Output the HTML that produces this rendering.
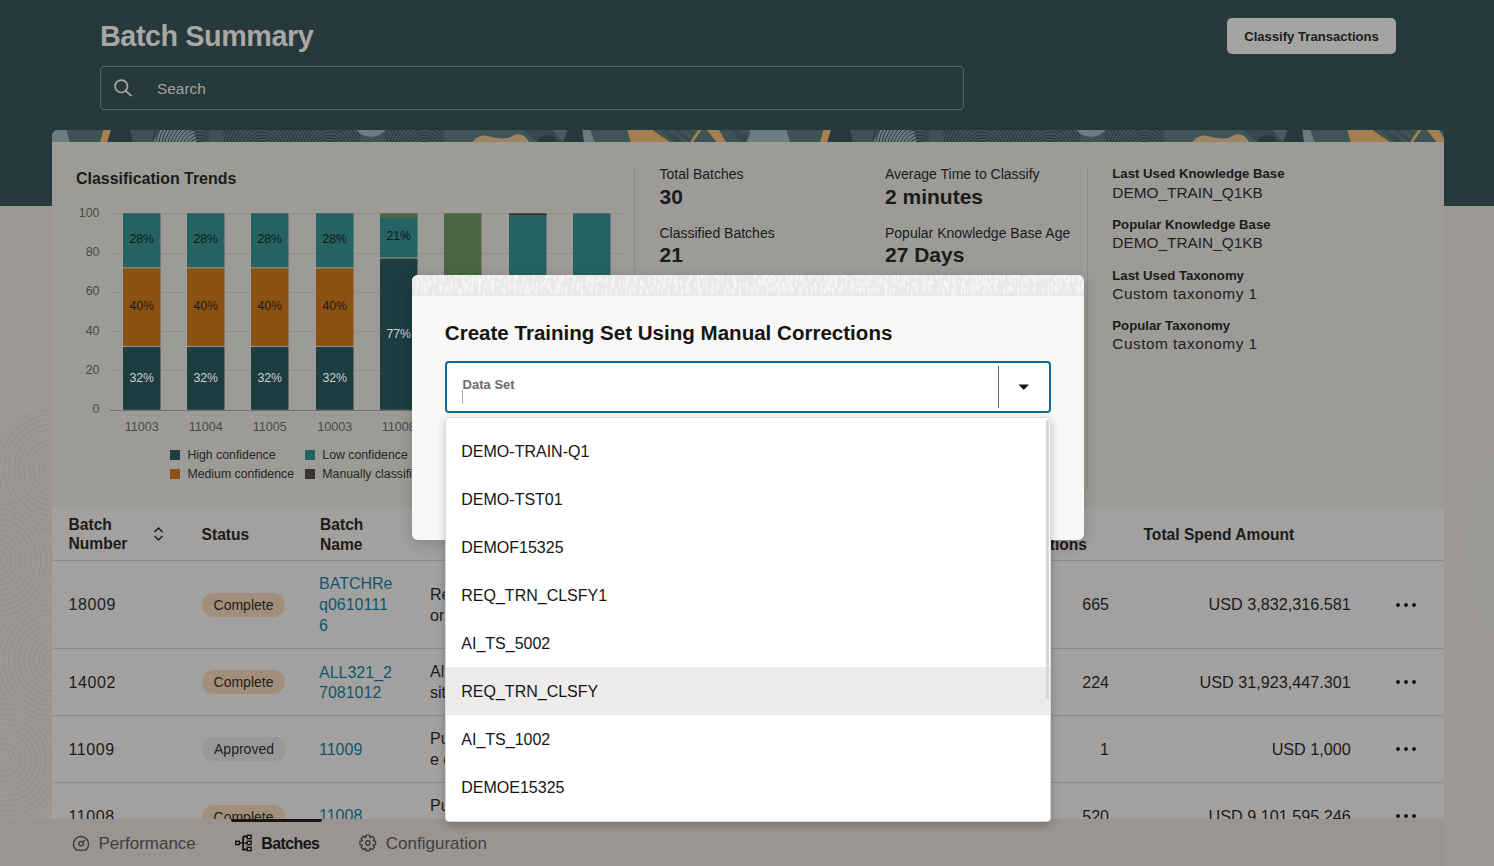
<!DOCTYPE html>
<html><head><meta charset="utf-8"><style>
html,body{margin:0;padding:0;width:1494px;height:866px;overflow:hidden;position:relative;font-family:"Liberation Sans",sans-serif;}
.t{position:absolute;line-height:1;white-space:nowrap;}
</style></head><body>
<div style="position:absolute;left:0px;top:0px;width:1494px;height:866px;background:#9b9896;"></div>
<svg style="position:absolute;left:0;top:0" width="1494" height="866"><ellipse cx="1540" cy="545" rx="75" ry="120" fill="#9b9a97"/><g fill="none" stroke="#8c8886" stroke-width="1.2" opacity="0.4"><circle cx="55" cy="470" r="6" /><circle cx="55" cy="470" r="11" /><circle cx="55" cy="470" r="16" /><circle cx="55" cy="470" r="21" /><circle cx="55" cy="470" r="26" /><circle cx="55" cy="470" r="31" /><circle cx="55" cy="470" r="36" /><circle cx="55" cy="470" r="41" /><circle cx="55" cy="470" r="46" /><circle cx="55" cy="470" r="51" /><circle cx="55" cy="470" r="56" /><circle cx="55" cy="470" r="61" /><circle cx="-5" cy="560" r="6" /><circle cx="-5" cy="560" r="11" /><circle cx="-5" cy="560" r="16" /><circle cx="-5" cy="560" r="21" /><circle cx="-5" cy="560" r="26" /><circle cx="-5" cy="560" r="31" /><circle cx="-5" cy="560" r="36" /><circle cx="-5" cy="560" r="41" /><circle cx="-5" cy="560" r="46" /><circle cx="-5" cy="560" r="51" /><circle cx="-5" cy="560" r="56" /><circle cx="-5" cy="560" r="61" /><circle cx="55" cy="660" r="6" /><circle cx="55" cy="660" r="11" /><circle cx="55" cy="660" r="16" /><circle cx="55" cy="660" r="21" /><circle cx="55" cy="660" r="26" /><circle cx="55" cy="660" r="31" /><circle cx="55" cy="660" r="36" /><circle cx="55" cy="660" r="41" /><circle cx="55" cy="660" r="46" /><circle cx="55" cy="660" r="51" /><circle cx="55" cy="660" r="56" /><circle cx="55" cy="660" r="61" /><circle cx="5" cy="760" r="6" /><circle cx="5" cy="760" r="11" /><circle cx="5" cy="760" r="16" /><circle cx="5" cy="760" r="21" /><circle cx="5" cy="760" r="26" /><circle cx="5" cy="760" r="31" /><circle cx="5" cy="760" r="36" /><circle cx="5" cy="760" r="41" /><circle cx="5" cy="760" r="46" /><circle cx="5" cy="760" r="51" /><circle cx="5" cy="760" r="56" /><circle cx="5" cy="760" r="61" /></g></svg>
<div style="position:absolute;left:0px;top:0px;width:1494px;height:206px;background:#26393c;"></div>
<div class="t" style="left:100.00px;top:21.72px;font-size:28.8px;color:#a9a7a4;font-weight:700;letter-spacing:-0.45px;">Batch Summary</div>
<div style="position:absolute;left:100px;top:66px;width:862px;height:42px;border:1px solid #4f6564;border-radius:4px;"></div>
<svg style="position:absolute;left:110px;top:75px" width="26" height="26"><circle cx="11.3" cy="11.3" r="6.2" fill="none" stroke="#aaa69f" stroke-width="1.7"/><line x1="15.8" y1="15.8" x2="21" y2="20.5" stroke="#aaa69f" stroke-width="1.8" stroke-linecap="round"/></svg>
<div class="t" style="left:157.00px;top:80.86px;font-size:15.4px;color:#a3a19c;font-weight:400;">Search</div>
<div style="position:absolute;left:1227px;top:18px;width:169px;height:36px;background:#a4a4a3;border-radius:5px;"></div>
<div class="t" style="left:1311.50px;transform:translateX(-50%);top:29.91px;font-size:13.1px;color:#1c1c1c;font-weight:700;">Classify Transactions</div>
<div style="position:absolute;left:52px;top:130px;width:1392px;height:378px;background:#9c9b98;border-radius:6px 6px 0 0;overflow:hidden;"><svg width="1392" height="12" style="position:absolute;left:0;top:0"><defs><clipPath id="c0_0"><rect x="101" y="0" width="57" height="12"/></clipPath><clipPath id="c0_1"><rect x="171" y="0" width="69" height="12"/></clipPath><clipPath id="c0_2"><rect x="240" y="0" width="68" height="12"/></clipPath><clipPath id="c0_3"><rect x="333" y="0" width="59" height="12"/></clipPath><clipPath id="c720_0"><rect x="821" y="0" width="57" height="12"/></clipPath><clipPath id="c720_1"><rect x="891" y="0" width="69" height="12"/></clipPath><clipPath id="c720_2"><rect x="960" y="0" width="68" height="12"/></clipPath><clipPath id="c720_3"><rect x="1053" y="0" width="59" height="12"/></clipPath></defs><rect x="0" y="0" width="1392" height="12" fill="#3b5353"/><polygon points="-22.0,0 14.5,0 17.7,12 -22.0,12" fill="#6d7e81" /><polygon points="51.4,0 59.0,0 55.4,12 48.2,12" fill="#a5804e" /><polygon points="59.0,0 78.3,0 80.7,12 55.4,12" fill="#243a3c" /><polygon points="107.6,0 141.4,0 145.0,12 101.2,12" fill="#6d7e81" /><path d="M302.8 0 Q320 14 333.7 0 Z" fill="#6d7e81"/><polygon points="392.0,0 472.4,0 485.0,12 392.0,12" fill="#3f5656" /><path d="M420.2 12 C425 6 430 4 438 6.5 C446 8.5 456 10 462 5 C468 3 473 5 477.29999999999995 12 Z" fill="#9d8464"/><polygon points="472.4,0 516.0,0 511.4,12 485.0,12" fill="#34494a" /><polygon points="500.5,0 515.8,0 511.0,12" fill="#485e5e" /><path d="M485.70000000000005 12 A10 8.5 0 0 1 505.4 12 Z" fill="#243a3c"/><polygon points="515.8,0 531.9,0 532.0,12 511.4,12" fill="#243a3c" /><polygon points="530.4,0 538.4,0 542.9,12 532.0,12" fill="#687b80" /><polygon points="543.0,0 575.4,0 578.6,12 542.9,12" fill="#3f5656" /><polygon points="575.4,0 600.3,0 618.0,12 578.6,12" fill="#a5804e" /><polygon points="608.0,0 616.0,0 632.0,12 624.0,12" fill="#34494a" /><polygon points="622.0,0 628.0,0 642.0,12 636.0,12" fill="#34494a" /><polygon points="646.0,0 649.6,0 641.2,12 638.0,12" fill="#a5804e" /><polygon points="654.9,0 666.9,0 674.1,12 664.5,12" fill="#a5804e" /><polygon points="678.0,0 688.0,0 700.0,12 690.0,12" fill="#34494a" /><polygon points="700.2,0 734.0,0 738.0,12 694.2,12" fill="#6d7e81" /><polygon points="698.0,0 734.5,0 737.7,12 698.0,12" fill="#6d7e81" /><polygon points="771.4,0 779.0,0 775.4,12 768.2,12" fill="#a5804e" /><polygon points="779.0,0 798.3,0 800.7,12 775.4,12" fill="#243a3c" /><polygon points="827.6,0 861.4,0 865.0,12 821.2,12" fill="#6d7e81" /><path d="M1022.8 0 Q1040 14 1053.7 0 Z" fill="#6d7e81"/><polygon points="1112.0,0 1192.4,0 1205.0,12 1112.0,12" fill="#3f5656" /><path d="M1140.2 12 C1145 6 1150 4 1158 6.5 C1166 8.5 1176 10 1182 5 C1188 3 1193 5 1197.3 12 Z" fill="#9d8464"/><polygon points="1192.4,0 1236.0,0 1231.4,12 1205.0,12" fill="#34494a" /><polygon points="1220.5,0 1235.8,0 1231.0,12" fill="#485e5e" /><path d="M1205.7 12 A10 8.5 0 0 1 1225.4 12 Z" fill="#243a3c"/><polygon points="1235.8,0 1251.9,0 1252.0,12 1231.4,12" fill="#243a3c" /><polygon points="1250.4,0 1258.4,0 1262.9,12 1252.0,12" fill="#687b80" /><polygon points="1263.0,0 1295.4,0 1298.6,12 1262.9,12" fill="#3f5656" /><polygon points="1295.4,0 1320.3,0 1338.0,12 1298.6,12" fill="#a5804e" /><polygon points="1328.0,0 1336.0,0 1352.0,12 1344.0,12" fill="#34494a" /><polygon points="1342.0,0 1348.0,0 1362.0,12 1356.0,12" fill="#34494a" /><polygon points="1366.0,0 1369.6,0 1361.2,12 1358.0,12" fill="#a5804e" /><polygon points="1374.9,0 1386.9,0 1394.1,12 1384.5,12" fill="#a5804e" /><polygon points="1398.0,0 1408.0,0 1420.0,12 1410.0,12" fill="#34494a" /><polygon points="1420.2,0 1454.0,0 1458.0,12 1414.2,12" fill="#6d7e81" /><g clip-path="url(#c0_0)" fill="none" stroke="#22373a" stroke-width="1"><circle cx="148" cy="20" r="9"/><circle cx="148" cy="20" r="12"/><circle cx="148" cy="20" r="15"/><circle cx="148" cy="20" r="18"/><circle cx="148" cy="20" r="21"/><circle cx="148" cy="20" r="24"/><circle cx="148" cy="20" r="27"/><circle cx="148" cy="20" r="30"/><circle cx="148" cy="20" r="33"/><circle cx="148" cy="20" r="36"/><circle cx="148" cy="20" r="39"/><circle cx="148" cy="20" r="42"/><circle cx="148" cy="20" r="45"/><circle cx="148" cy="20" r="48"/><circle cx="148" cy="20" r="51"/><circle cx="148" cy="20" r="54"/><circle cx="148" cy="20" r="57"/></g><g clip-path="url(#c0_1)" fill="none" stroke="#22373a" stroke-width="1"><circle cx="210" cy="20" r="9"/><circle cx="210" cy="20" r="12"/><circle cx="210" cy="20" r="15"/><circle cx="210" cy="20" r="18"/><circle cx="210" cy="20" r="21"/><circle cx="210" cy="20" r="24"/><circle cx="210" cy="20" r="27"/><circle cx="210" cy="20" r="30"/><circle cx="210" cy="20" r="33"/><circle cx="210" cy="20" r="36"/><circle cx="210" cy="20" r="39"/><circle cx="210" cy="20" r="42"/><circle cx="210" cy="20" r="45"/><circle cx="210" cy="20" r="48"/><circle cx="210" cy="20" r="51"/><circle cx="210" cy="20" r="54"/><circle cx="210" cy="20" r="57"/></g><g clip-path="url(#c0_2)" fill="none" stroke="#22373a" stroke-width="1"><circle cx="278" cy="20" r="9"/><circle cx="278" cy="20" r="12"/><circle cx="278" cy="20" r="15"/><circle cx="278" cy="20" r="18"/><circle cx="278" cy="20" r="21"/><circle cx="278" cy="20" r="24"/><circle cx="278" cy="20" r="27"/><circle cx="278" cy="20" r="30"/><circle cx="278" cy="20" r="33"/><circle cx="278" cy="20" r="36"/><circle cx="278" cy="20" r="39"/><circle cx="278" cy="20" r="42"/><circle cx="278" cy="20" r="45"/><circle cx="278" cy="20" r="48"/><circle cx="278" cy="20" r="51"/><circle cx="278" cy="20" r="54"/><circle cx="278" cy="20" r="57"/></g><g clip-path="url(#c0_3)" fill="none" stroke="#22373a" stroke-width="1"><circle cx="373" cy="20" r="9"/><circle cx="373" cy="20" r="12"/><circle cx="373" cy="20" r="15"/><circle cx="373" cy="20" r="18"/><circle cx="373" cy="20" r="21"/><circle cx="373" cy="20" r="24"/><circle cx="373" cy="20" r="27"/><circle cx="373" cy="20" r="30"/><circle cx="373" cy="20" r="33"/><circle cx="373" cy="20" r="36"/><circle cx="373" cy="20" r="39"/><circle cx="373" cy="20" r="42"/><circle cx="373" cy="20" r="45"/><circle cx="373" cy="20" r="48"/><circle cx="373" cy="20" r="51"/><circle cx="373" cy="20" r="54"/><circle cx="373" cy="20" r="57"/></g><g clip-path="url(#c720_0)" fill="none" stroke="#22373a" stroke-width="1"><circle cx="868" cy="20" r="9"/><circle cx="868" cy="20" r="12"/><circle cx="868" cy="20" r="15"/><circle cx="868" cy="20" r="18"/><circle cx="868" cy="20" r="21"/><circle cx="868" cy="20" r="24"/><circle cx="868" cy="20" r="27"/><circle cx="868" cy="20" r="30"/><circle cx="868" cy="20" r="33"/><circle cx="868" cy="20" r="36"/><circle cx="868" cy="20" r="39"/><circle cx="868" cy="20" r="42"/><circle cx="868" cy="20" r="45"/><circle cx="868" cy="20" r="48"/><circle cx="868" cy="20" r="51"/><circle cx="868" cy="20" r="54"/><circle cx="868" cy="20" r="57"/></g><g clip-path="url(#c720_1)" fill="none" stroke="#22373a" stroke-width="1"><circle cx="930" cy="20" r="9"/><circle cx="930" cy="20" r="12"/><circle cx="930" cy="20" r="15"/><circle cx="930" cy="20" r="18"/><circle cx="930" cy="20" r="21"/><circle cx="930" cy="20" r="24"/><circle cx="930" cy="20" r="27"/><circle cx="930" cy="20" r="30"/><circle cx="930" cy="20" r="33"/><circle cx="930" cy="20" r="36"/><circle cx="930" cy="20" r="39"/><circle cx="930" cy="20" r="42"/><circle cx="930" cy="20" r="45"/><circle cx="930" cy="20" r="48"/><circle cx="930" cy="20" r="51"/><circle cx="930" cy="20" r="54"/><circle cx="930" cy="20" r="57"/></g><g clip-path="url(#c720_2)" fill="none" stroke="#22373a" stroke-width="1"><circle cx="998" cy="20" r="9"/><circle cx="998" cy="20" r="12"/><circle cx="998" cy="20" r="15"/><circle cx="998" cy="20" r="18"/><circle cx="998" cy="20" r="21"/><circle cx="998" cy="20" r="24"/><circle cx="998" cy="20" r="27"/><circle cx="998" cy="20" r="30"/><circle cx="998" cy="20" r="33"/><circle cx="998" cy="20" r="36"/><circle cx="998" cy="20" r="39"/><circle cx="998" cy="20" r="42"/><circle cx="998" cy="20" r="45"/><circle cx="998" cy="20" r="48"/><circle cx="998" cy="20" r="51"/><circle cx="998" cy="20" r="54"/><circle cx="998" cy="20" r="57"/></g><g clip-path="url(#c720_3)" fill="none" stroke="#22373a" stroke-width="1"><circle cx="1093" cy="20" r="9"/><circle cx="1093" cy="20" r="12"/><circle cx="1093" cy="20" r="15"/><circle cx="1093" cy="20" r="18"/><circle cx="1093" cy="20" r="21"/><circle cx="1093" cy="20" r="24"/><circle cx="1093" cy="20" r="27"/><circle cx="1093" cy="20" r="30"/><circle cx="1093" cy="20" r="33"/><circle cx="1093" cy="20" r="36"/><circle cx="1093" cy="20" r="39"/><circle cx="1093" cy="20" r="42"/><circle cx="1093" cy="20" r="45"/><circle cx="1093" cy="20" r="48"/><circle cx="1093" cy="20" r="51"/><circle cx="1093" cy="20" r="54"/><circle cx="1093" cy="20" r="57"/></g></svg></div>
<div class="t" style="left:76.00px;top:170.60px;font-size:15.95px;color:#1b1b1a;font-weight:700;">Classification Trends</div>
<div style="position:absolute;left:110px;top:213px;width:514px;height:1px;background:#8f8e8b;"></div>
<div class="t" style="right:1394.50px;top:206.70px;font-size:12.4px;color:#4a4846;font-weight:400;">100</div>
<div style="position:absolute;left:110px;top:253px;width:514px;height:1px;background:#8f8e8b;"></div>
<div class="t" style="right:1394.50px;top:246.00px;font-size:12.4px;color:#4a4846;font-weight:400;">80</div>
<div style="position:absolute;left:110px;top:292px;width:514px;height:1px;background:#8f8e8b;"></div>
<div class="t" style="right:1394.50px;top:285.30px;font-size:12.4px;color:#4a4846;font-weight:400;">60</div>
<div style="position:absolute;left:110px;top:331px;width:514px;height:1px;background:#8f8e8b;"></div>
<div class="t" style="right:1394.50px;top:324.60px;font-size:12.4px;color:#4a4846;font-weight:400;">40</div>
<div style="position:absolute;left:110px;top:370px;width:514px;height:1px;background:#8f8e8b;"></div>
<div class="t" style="right:1394.50px;top:363.90px;font-size:12.4px;color:#4a4846;font-weight:400;">20</div>
<div style="position:absolute;left:110px;top:410px;width:514px;height:1px;background:#6f6e6c;"></div>
<div class="t" style="right:1394.50px;top:403.20px;font-size:12.4px;color:#4a4846;font-weight:400;">0</div>
<svg style="position:absolute;left:0;top:0;font-family:'Liberation Sans'" width="700" height="500"><rect x="123" y="346.92" width="37.5" height="62.88" fill="#1d3d40"/><text x="141.75" y="381.76" text-anchor="middle" font-size="12.3" fill="#cfcfcf">32%</text><rect x="123" y="268.32" width="37.5" height="77.60" fill="#8a5113"/><text x="141.75" y="310.42" text-anchor="middle" font-size="12.3" fill="#1b1b1b">40%</text><rect x="123" y="213.30" width="37.5" height="54.02" fill="#246362"/><text x="141.75" y="242.61" text-anchor="middle" font-size="12.3" fill="#161616">28%</text><rect x="187" y="346.92" width="37.5" height="62.88" fill="#1d3d40"/><text x="205.75" y="381.76" text-anchor="middle" font-size="12.3" fill="#cfcfcf">32%</text><rect x="187" y="268.32" width="37.5" height="77.60" fill="#8a5113"/><text x="205.75" y="310.42" text-anchor="middle" font-size="12.3" fill="#1b1b1b">40%</text><rect x="187" y="213.30" width="37.5" height="54.02" fill="#246362"/><text x="205.75" y="242.61" text-anchor="middle" font-size="12.3" fill="#161616">28%</text><rect x="251" y="346.92" width="37.5" height="62.88" fill="#1d3d40"/><text x="269.75" y="381.76" text-anchor="middle" font-size="12.3" fill="#cfcfcf">32%</text><rect x="251" y="268.32" width="37.5" height="77.60" fill="#8a5113"/><text x="269.75" y="310.42" text-anchor="middle" font-size="12.3" fill="#1b1b1b">40%</text><rect x="251" y="213.30" width="37.5" height="54.02" fill="#246362"/><text x="269.75" y="242.61" text-anchor="middle" font-size="12.3" fill="#161616">28%</text><rect x="316" y="346.92" width="37.5" height="62.88" fill="#1d3d40"/><text x="334.75" y="381.76" text-anchor="middle" font-size="12.3" fill="#cfcfcf">32%</text><rect x="316" y="268.32" width="37.5" height="77.60" fill="#8a5113"/><text x="334.75" y="310.42" text-anchor="middle" font-size="12.3" fill="#1b1b1b">40%</text><rect x="316" y="213.30" width="37.5" height="54.02" fill="#246362"/><text x="334.75" y="242.61" text-anchor="middle" font-size="12.3" fill="#161616">28%</text><rect x="380" y="258.50" width="37.5" height="151.31" fill="#1d3d40"/><text x="398.75" y="337.55" text-anchor="middle" font-size="12.3" fill="#cfcfcf">77%</text><rect x="380" y="217.23" width="37.5" height="40.26" fill="#246362"/><text x="398.75" y="239.66" text-anchor="middle" font-size="12.3" fill="#161616">21%</text><rect x="380" y="213.30" width="37.5" height="3.93" fill="#4a6741"/><rect x="444" y="213.30" width="37.5" height="196.50" fill="#4a6741"/><rect x="509" y="215.07" width="37.5" height="194.73" fill="#246362"/><rect x="509" y="213.30" width="37.5" height="1.77" fill="#3a3331"/><rect x="573" y="213.30" width="37.5" height="196.50" fill="#246362"/><text x="591.75" y="313.35" text-anchor="middle" font-size="12.3" fill="#161616">100%</text></svg>
<div class="t" style="left:141.75px;transform:translateX(-50%);top:421.23px;font-size:12.6px;color:#4b4947;font-weight:400;">11003</div>
<div class="t" style="left:205.75px;transform:translateX(-50%);top:421.23px;font-size:12.6px;color:#4b4947;font-weight:400;">11004</div>
<div class="t" style="left:269.75px;transform:translateX(-50%);top:421.23px;font-size:12.6px;color:#4b4947;font-weight:400;">11005</div>
<div class="t" style="left:334.75px;transform:translateX(-50%);top:421.23px;font-size:12.6px;color:#4b4947;font-weight:400;">10003</div>
<div class="t" style="left:398.75px;transform:translateX(-50%);top:421.23px;font-size:12.6px;color:#4b4947;font-weight:400;">11008</div>
<div class="t" style="left:462.75px;transform:translateX(-50%);top:421.23px;font-size:12.6px;color:#4b4947;font-weight:400;">11007</div>
<div class="t" style="left:527.75px;transform:translateX(-50%);top:421.23px;font-size:12.6px;color:#4b4947;font-weight:400;">11006</div>
<div class="t" style="left:591.75px;transform:translateX(-50%);top:421.23px;font-size:12.6px;color:#4b4947;font-weight:400;">11002</div>
<div style="position:absolute;left:170px;top:450px;width:10px;height:10px;background:#1d3d40;"></div>
<div class="t" style="left:187.40px;top:449.29px;font-size:12.3px;color:#262625;font-weight:400;">High confidence</div>
<div style="position:absolute;left:305px;top:450px;width:10px;height:10px;background:#246362;"></div>
<div class="t" style="left:322.30px;top:449.29px;font-size:12.3px;color:#262625;font-weight:400;">Low confidence</div>
<div style="position:absolute;left:170px;top:469px;width:10px;height:10px;background:#8a5113;"></div>
<div class="t" style="left:187.40px;top:468.19px;font-size:12.3px;color:#262625;font-weight:400;">Medium confidence</div>
<div style="position:absolute;left:305px;top:469px;width:10px;height:10px;background:#3a3331;"></div>
<div class="t" style="left:322.30px;top:468.19px;font-size:12.3px;color:#262625;font-weight:400;">Manually classified</div>
<div style="position:absolute;left:634px;top:166px;width:1px;height:325px;background:#8d8c89;"></div>
<div style="position:absolute;left:1087px;top:166px;width:1px;height:325px;background:#8d8c89;"></div>
<div class="t" style="left:659.50px;top:166.85px;font-size:14px;color:#1b1b1a;font-weight:400;">Total Batches</div>
<div class="t" style="left:659.50px;top:185.72px;font-size:21px;color:#1b1b1a;font-weight:700;">30</div>
<div class="t" style="left:659.50px;top:225.75px;font-size:14px;color:#1b1b1a;font-weight:400;">Classified Batches</div>
<div class="t" style="left:659.50px;top:243.92px;font-size:21px;color:#1b1b1a;font-weight:700;">21</div>
<div class="t" style="left:885.00px;top:166.85px;font-size:14px;color:#1b1b1a;font-weight:400;">Average Time to Classify</div>
<div class="t" style="left:885.00px;top:185.72px;font-size:21px;color:#1b1b1a;font-weight:700;">2 minutes</div>
<div class="t" style="left:885.00px;top:225.75px;font-size:14px;color:#1b1b1a;font-weight:400;">Popular Knowledge Base Age</div>
<div class="t" style="left:885.00px;top:243.92px;font-size:21px;color:#1b1b1a;font-weight:700;">27 Days</div>
<div class="t" style="left:1112.30px;top:167.32px;font-size:13.2px;color:#1b1b1a;font-weight:700;">Last Used Knowledge Base</div>
<div class="t" style="left:1112.30px;top:184.56px;font-size:15.4px;color:#222;font-weight:400;">DEMO_TRAIN_Q1KB</div>
<div class="t" style="left:1112.30px;top:217.92px;font-size:13.2px;color:#1b1b1a;font-weight:700;">Popular Knowledge Base</div>
<div class="t" style="left:1112.30px;top:235.16px;font-size:15.4px;color:#222;font-weight:400;">DEMO_TRAIN_Q1KB</div>
<div class="t" style="left:1112.30px;top:268.52px;font-size:13.2px;color:#1b1b1a;font-weight:700;">Last Used Taxonomy</div>
<div class="t" style="left:1112.30px;top:285.76px;font-size:15.4px;color:#222;font-weight:400;letter-spacing:0.5px;">Custom taxonomy 1</div>
<div class="t" style="left:1112.30px;top:319.12px;font-size:13.2px;color:#1b1b1a;font-weight:700;">Popular Taxonomy</div>
<div class="t" style="left:1112.30px;top:336.36px;font-size:15.4px;color:#222;font-weight:400;letter-spacing:0.5px;">Custom taxonomy 1</div>
<div style="position:absolute;left:52px;top:508px;width:1392px;height:311px;background:#a2a1a0;"></div>
<div style="position:absolute;left:52px;top:560px;width:1392px;height:1px;background:#8d8c8a;"></div>
<div style="position:absolute;left:52px;top:648px;width:1392px;height:1px;background:#8d8c8a;"></div>
<div style="position:absolute;left:52px;top:715px;width:1392px;height:1px;background:#8d8c8a;"></div>
<div style="position:absolute;left:52px;top:782px;width:1392px;height:1px;background:#8d8c8a;"></div>
<div class="t" style="left:68.50px;top:516.59px;font-size:15.6px;color:#1b1b1a;font-weight:700;">Batch</div>
<div class="t" style="left:68.50px;top:536.29px;font-size:15.6px;color:#1b1b1a;font-weight:700;">Number</div>
<svg style="position:absolute;left:152px;top:526px" width="13" height="16"><polyline points="2.5,6 6.5,2 10.5,6" fill="none" stroke="#1b1b1a" stroke-width="1.5"/><polyline points="2.5,10 6.5,14 10.5,10" fill="none" stroke="#1b1b1a" stroke-width="1.5"/></svg>
<div class="t" style="left:201.60px;top:527.29px;font-size:15.6px;color:#1b1b1a;font-weight:700;">Status</div>
<div class="t" style="left:320.00px;top:517.19px;font-size:15.6px;color:#1b1b1a;font-weight:700;">Batch</div>
<div class="t" style="left:320.00px;top:537.19px;font-size:15.6px;color:#1b1b1a;font-weight:700;">Name</div>
<div class="t" style="right:407.00px;top:537.39px;font-size:15.6px;color:#1b1b1a;font-weight:700;">tions</div>
<div class="t" style="left:1143.50px;top:526.79px;font-size:15.6px;color:#1b1b1a;font-weight:700;">Total Spend Amount</div>
<div class="t" style="left:68.50px;top:597.15px;font-size:16px;color:#1b1b1a;font-weight:400;letter-spacing:0.6px;">18009</div>
<div style="position:absolute;left:202px;top:593px;width:83px;height:24px;border-radius:12px;background:#a18e7b;"></div>
<div class="t" style="left:243.50px;transform:translateX(-50%);top:598.35px;font-size:14px;color:#1e1e1d;font-weight:400;">Complete</div>
<div class="t" style="left:319.00px;top:576.35px;font-size:16px;color:#10566b;font-weight:400;">BATCHRe</div>
<div class="t" style="left:319.00px;top:597.15px;font-size:16px;color:#10566b;font-weight:400;">q0610111</div>
<div class="t" style="left:319.00px;top:617.95px;font-size:16px;color:#10566b;font-weight:400;">6</div>
<div class="t" style="left:430.00px;top:587.05px;font-size:16px;color:#1b1b1a;font-weight:400;">Re</div>
<div class="t" style="left:430.00px;top:608.05px;font-size:16px;color:#1b1b1a;font-weight:400;">or</div>
<div class="t" style="right:385.00px;top:597.15px;font-size:16px;color:#1b1b1a;font-weight:400;">665</div>
<div class="t" style="right:143.20px;top:596.18px;font-size:16.2px;color:#1b1b1a;font-weight:400;">USD 3,832,316.581</div>
<svg style="position:absolute;left:1394px;top:600.5px" width="24" height="8"><circle cx="4" cy="4" r="2" fill="#161616"/><circle cx="12" cy="4" r="2" fill="#161616"/><circle cx="20" cy="4" r="2" fill="#161616"/></svg>
<div class="t" style="left:68.50px;top:675.45px;font-size:16px;color:#1b1b1a;font-weight:400;letter-spacing:0.6px;">14002</div>
<div style="position:absolute;left:202px;top:670px;width:83px;height:24px;border-radius:12px;background:#a18e7b;"></div>
<div class="t" style="left:243.50px;transform:translateX(-50%);top:675.35px;font-size:14px;color:#1e1e1d;font-weight:400;">Complete</div>
<div class="t" style="left:319.00px;top:664.65px;font-size:16px;color:#10566b;font-weight:400;">ALL321_2</div>
<div class="t" style="left:319.00px;top:685.45px;font-size:16px;color:#10566b;font-weight:400;">7081012</div>
<div class="t" style="left:430.00px;top:664.25px;font-size:16px;color:#1b1b1a;font-weight:400;">Al</div>
<div class="t" style="left:430.00px;top:685.25px;font-size:16px;color:#1b1b1a;font-weight:400;">sit</div>
<div class="t" style="right:385.00px;top:675.45px;font-size:16px;color:#1b1b1a;font-weight:400;">224</div>
<div class="t" style="right:143.20px;top:674.48px;font-size:16.2px;color:#1b1b1a;font-weight:400;">USD 31,923,447.301</div>
<svg style="position:absolute;left:1394px;top:677.5px" width="24" height="8"><circle cx="4" cy="4" r="2" fill="#161616"/><circle cx="12" cy="4" r="2" fill="#161616"/><circle cx="20" cy="4" r="2" fill="#161616"/></svg>
<div class="t" style="left:68.50px;top:742.15px;font-size:16px;color:#1b1b1a;font-weight:400;letter-spacing:0.6px;">11009</div>
<div style="position:absolute;left:202px;top:737px;width:84px;height:24px;border-radius:12px;background:#9a9896;"></div>
<div class="t" style="left:244.00px;transform:translateX(-50%);top:742.35px;font-size:14px;color:#1e1e1d;font-weight:400;">Approved</div>
<div class="t" style="left:319.00px;top:742.35px;font-size:16px;color:#10566b;font-weight:400;">11009</div>
<div class="t" style="left:430.00px;top:730.85px;font-size:16px;color:#1b1b1a;font-weight:400;">Pu</div>
<div class="t" style="left:430.00px;top:751.85px;font-size:16px;color:#1b1b1a;font-weight:400;">e c</div>
<div class="t" style="right:385.00px;top:742.15px;font-size:16px;color:#1b1b1a;font-weight:400;">1</div>
<div class="t" style="right:143.20px;top:741.18px;font-size:16.2px;color:#1b1b1a;font-weight:400;">USD 1,000</div>
<svg style="position:absolute;left:1394px;top:744.5px" width="24" height="8"><circle cx="4" cy="4" r="2" fill="#161616"/><circle cx="12" cy="4" r="2" fill="#161616"/><circle cx="20" cy="4" r="2" fill="#161616"/></svg>
<div class="t" style="left:68.50px;top:808.75px;font-size:16px;color:#1b1b1a;font-weight:400;letter-spacing:0.6px;">11008</div>
<div style="position:absolute;left:202px;top:805px;width:83px;height:24px;border-radius:12px;background:#a18e7b;"></div>
<div class="t" style="left:243.50px;transform:translateX(-50%);top:810.35px;font-size:14px;color:#1e1e1d;font-weight:400;">Complete</div>
<div class="t" style="left:319.00px;top:808.35px;font-size:16px;color:#10566b;font-weight:400;">11008</div>
<div class="t" style="left:430.00px;top:798.05px;font-size:16px;color:#1b1b1a;font-weight:400;">Pu</div>
<div class="t" style="right:385.00px;top:808.75px;font-size:16px;color:#1b1b1a;font-weight:400;">520</div>
<div class="t" style="right:143.20px;top:807.78px;font-size:16.2px;color:#1b1b1a;font-weight:400;">USD 9,101,595.246</div>
<svg style="position:absolute;left:1394px;top:811.5px" width="24" height="8"><circle cx="4" cy="4" r="2" fill="#161616"/><circle cx="12" cy="4" r="2" fill="#161616"/><circle cx="20" cy="4" r="2" fill="#161616"/></svg>
<div style="position:absolute;left:52px;top:819px;width:1392px;height:47px;background:#9a9592;"></div>
<div style="position:absolute;left:0px;top:819px;width:52px;height:47px;background:#9a9592;"></div>
<div style="position:absolute;left:231px;top:819px;width:91px;height:3px;background:#161513;border-radius:0 0 2px 2px;"></div>
<svg style="position:absolute;left:64px;top:826px" width="34" height="34"><g fill="none" stroke="#3d3b3a" stroke-width="1.4" stroke-linecap="round"><path d="M12.3 24.1 A7.6 7.6 0 1 1 21.7 24.1 Z"/><circle cx="17.1" cy="17.6" r="2.2"/><line x1="18.6" y1="16.1" x2="20.4" y2="14.4"/></g></svg>
<div class="t" style="left:98.50px;top:834.81px;font-size:17px;color:#413f3d;font-weight:400;">Performance</div>
<svg style="position:absolute;left:226px;top:826px" width="34" height="34"><g fill="none" stroke="#161513" stroke-width="1.4"><rect x="9.7" y="15.2" width="3.6" height="3.4"/><rect x="21.3" y="9.3" width="3.8" height="3.4"/><rect x="21.3" y="15.2" width="3.8" height="3.4"/><rect x="21.3" y="21.3" width="3.8" height="3.4"/><line x1="13.3" y1="16.9" x2="21.3" y2="16.9"/></g><path d="M17.1 10.5 V23.5 H21.3 M17.1 10.5 H21.3" fill="none" stroke="#161513" stroke-width="1.8"/></svg>
<div class="t" style="left:261.20px;top:836.25px;font-size:16px;color:#161513;font-weight:700;letter-spacing:-0.6px;">Batches</div>
<svg style="position:absolute;left:350px;top:826px" width="34" height="34"><g fill="none" stroke="#3d3b3a" stroke-width="1.4" stroke-linejoin="round"><polygon points="15.82,11.34 15.72,11.38 16.05,9.09 19.55,9.09 19.88,11.38 20.33,11.57 20.23,11.53 22.09,10.14 24.56,12.61 23.17,14.47 23.36,14.92 23.32,14.82 25.61,15.15 25.61,18.65 23.32,18.98 23.13,19.43 23.17,19.33 24.56,21.19 22.09,23.66 20.23,22.27 19.78,22.46 19.88,22.42 19.55,24.71 16.05,24.71 15.72,22.42 15.27,22.23 15.37,22.27 13.51,23.66 11.04,21.19 12.43,19.33 12.24,18.88 12.28,18.98 9.99,18.65 9.99,15.15 12.28,14.82 12.47,14.37 12.43,14.47 11.04,12.61 13.51,10.14 15.37,11.53"/><circle cx="17.8" cy="16.9" r="2.1"/></g></svg>
<div class="t" style="left:385.80px;top:834.81px;font-size:17px;color:#413f3d;font-weight:400;">Configuration</div>
<div style="position:absolute;left:412px;top:275px;width:672px;height:265px;background:#f9f8f6;border-radius:6px;overflow:hidden;box-shadow:0 4px 16px rgba(0,0,0,0.18);"><svg width="672" height="21" style="position:absolute;left:0;top:0"><rect x="0" y="0" width="672" height="21" fill="#eae9ea"/><rect x="-0.7" y="0.6" width="1.9" height="4.3" rx="0.7" fill="#f6f5f5"/><rect x="-0.9" y="6.0" width="1.8" height="4.1" rx="0.7" fill="#f6f5f5"/><rect x="3.7" y="4.5" width="2.0" height="4.9" rx="0.7" fill="#f6f5f5"/><rect x="3.2" y="11.6" width="1.4" height="7.9" rx="0.7" fill="#f6f5f5"/><rect x="5.6" y="-1.4" width="1.7" height="4.5" rx="0.7" fill="#f6f5f5"/><rect x="5.4" y="6.3" width="1.8" height="6.6" rx="0.7" fill="#f6f5f5"/><rect x="5.1" y="10.2" width="2.1" height="4.8" rx="0.7" fill="#f6f5f5"/><rect x="8.6" y="0.3" width="1.7" height="5.8" rx="0.7" fill="#f6f5f5"/><rect x="9.4" y="5.0" width="1.9" height="6.3" rx="0.7" fill="#f6f5f5"/><rect x="9.5" y="11.2" width="1.5" height="7.9" rx="0.7" fill="#f6f5f5"/><rect x="12.5" y="-1.4" width="1.4" height="6.0" rx="0.7" fill="#f6f5f5"/><rect x="12.5" y="6.3" width="1.7" height="7.5" rx="0.7" fill="#f6f5f5"/><rect x="12.2" y="12.3" width="2.2" height="5.8" rx="0.7" fill="#f6f5f5"/><rect x="14.9" y="0.7" width="2.1" height="4.2" rx="0.7" fill="#f6f5f5"/><rect x="16.0" y="7.3" width="1.8" height="5.1" rx="0.7" fill="#f6f5f5"/><rect x="14.0" y="11.8" width="1.5" height="4.7" rx="0.7" fill="#f6f5f5"/><rect x="17.3" y="5.0" width="2.3" height="5.6" rx="0.7" fill="#f6f5f5"/><rect x="21.1" y="1.5" width="2.3" height="7.3" rx="0.7" fill="#f6f5f5"/><rect x="20.7" y="13.5" width="1.6" height="7.8" rx="0.7" fill="#f6f5f5"/><rect x="27.2" y="-0.9" width="1.8" height="4.0" rx="0.7" fill="#f6f5f5"/><rect x="27.1" y="7.8" width="1.9" height="6.8" rx="0.7" fill="#f6f5f5"/><rect x="27.4" y="10.2" width="2.2" height="7.6" rx="0.7" fill="#f6f5f5"/><rect x="30.6" y="-0.4" width="1.5" height="5.6" rx="0.7" fill="#f6f5f5"/><rect x="29.1" y="4.3" width="1.6" height="4.8" rx="0.7" fill="#f6f5f5"/><rect x="29.1" y="10.0" width="1.5" height="4.6" rx="0.7" fill="#f6f5f5"/><rect x="32.1" y="1.5" width="1.5" height="6.5" rx="0.7" fill="#f6f5f5"/><rect x="32.7" y="10.5" width="2.4" height="7.4" rx="0.7" fill="#f6f5f5"/><rect x="36.0" y="-1.7" width="1.7" height="4.4" rx="0.7" fill="#f6f5f5"/><rect x="35.3" y="10.1" width="1.9" height="7.8" rx="0.7" fill="#f6f5f5"/><rect x="38.1" y="6.1" width="2.3" height="7.9" rx="0.7" fill="#f6f5f5"/><rect x="38.5" y="11.5" width="2.2" height="4.7" rx="0.7" fill="#f6f5f5"/><rect x="42.6" y="-0.7" width="2.2" height="4.9" rx="0.7" fill="#f6f5f5"/><rect x="42.7" y="7.2" width="2.1" height="7.3" rx="0.7" fill="#f6f5f5"/><rect x="44.7" y="-1.9" width="1.7" height="4.1" rx="0.7" fill="#f6f5f5"/><rect x="45.9" y="11.8" width="2.4" height="7.7" rx="0.7" fill="#f6f5f5"/><rect x="47.7" y="-1.1" width="1.6" height="4.9" rx="0.7" fill="#f6f5f5"/><rect x="48.8" y="13.4" width="2.1" height="5.9" rx="0.7" fill="#f6f5f5"/><rect x="50.2" y="0.6" width="2.2" height="7.6" rx="0.7" fill="#f6f5f5"/><rect x="51.0" y="4.7" width="1.7" height="7.2" rx="0.7" fill="#f6f5f5"/><rect x="51.9" y="11.6" width="2.3" height="5.6" rx="0.7" fill="#f6f5f5"/><rect x="53.3" y="-1.5" width="2.3" height="4.6" rx="0.7" fill="#f6f5f5"/><rect x="53.3" y="7.3" width="2.1" height="7.9" rx="0.7" fill="#f6f5f5"/><rect x="54.1" y="10.5" width="2.4" height="4.1" rx="0.7" fill="#f6f5f5"/><rect x="57.1" y="1.7" width="2.3" height="5.7" rx="0.7" fill="#f6f5f5"/><rect x="56.4" y="5.0" width="1.6" height="5.2" rx="0.7" fill="#f6f5f5"/><rect x="56.5" y="11.7" width="2.3" height="4.5" rx="0.7" fill="#f6f5f5"/><rect x="59.9" y="0.3" width="1.8" height="7.6" rx="0.7" fill="#f6f5f5"/><rect x="60.0" y="6.1" width="1.4" height="6.1" rx="0.7" fill="#f6f5f5"/><rect x="59.4" y="10.0" width="1.6" height="7.2" rx="0.7" fill="#f6f5f5"/><rect x="63.5" y="0.2" width="1.9" height="5.3" rx="0.7" fill="#f6f5f5"/><rect x="63.6" y="4.4" width="1.6" height="6.2" rx="0.7" fill="#f6f5f5"/><rect x="66.0" y="0.2" width="2.3" height="7.0" rx="0.7" fill="#f6f5f5"/><rect x="66.2" y="6.0" width="2.1" height="6.0" rx="0.7" fill="#f6f5f5"/><rect x="66.1" y="11.9" width="2.1" height="7.8" rx="0.7" fill="#f6f5f5"/><rect x="69.9" y="-1.0" width="2.3" height="6.2" rx="0.7" fill="#f6f5f5"/><rect x="68.3" y="4.5" width="1.5" height="5.8" rx="0.7" fill="#f6f5f5"/><rect x="72.6" y="7.6" width="2.1" height="4.6" rx="0.7" fill="#f6f5f5"/><rect x="71.3" y="13.5" width="1.6" height="7.9" rx="0.7" fill="#f6f5f5"/><rect x="74.8" y="-0.1" width="2.2" height="8.0" rx="0.7" fill="#f6f5f5"/><rect x="75.0" y="11.4" width="1.7" height="4.8" rx="0.7" fill="#f6f5f5"/><rect x="77.0" y="0.2" width="1.4" height="5.8" rx="0.7" fill="#f6f5f5"/><rect x="78.2" y="6.0" width="2.4" height="4.3" rx="0.7" fill="#f6f5f5"/><rect x="78.9" y="10.4" width="1.4" height="5.1" rx="0.7" fill="#f6f5f5"/><rect x="80.5" y="-1.5" width="2.3" height="5.7" rx="0.7" fill="#f6f5f5"/><rect x="80.5" y="4.6" width="2.0" height="7.7" rx="0.7" fill="#f6f5f5"/><rect x="80.2" y="10.2" width="1.8" height="6.8" rx="0.7" fill="#f6f5f5"/><rect x="84.3" y="7.2" width="2.3" height="4.3" rx="0.7" fill="#f6f5f5"/><rect x="86.9" y="-0.6" width="2.3" height="6.2" rx="0.7" fill="#f6f5f5"/><rect x="89.5" y="-1.6" width="1.5" height="4.6" rx="0.7" fill="#f6f5f5"/><rect x="89.6" y="13.0" width="1.9" height="5.2" rx="0.7" fill="#f6f5f5"/><rect x="92.0" y="5.0" width="2.1" height="4.1" rx="0.7" fill="#f6f5f5"/><rect x="92.4" y="11.9" width="1.5" height="7.7" rx="0.7" fill="#f6f5f5"/><rect x="95.9" y="-0.0" width="1.8" height="7.3" rx="0.7" fill="#f6f5f5"/><rect x="96.4" y="7.9" width="2.2" height="5.4" rx="0.7" fill="#f6f5f5"/><rect x="96.3" y="11.6" width="1.5" height="5.4" rx="0.7" fill="#f6f5f5"/><rect x="98.5" y="10.7" width="2.2" height="4.3" rx="0.7" fill="#f6f5f5"/><rect x="102.3" y="-0.9" width="1.7" height="5.0" rx="0.7" fill="#f6f5f5"/><rect x="101.3" y="5.8" width="2.4" height="5.1" rx="0.7" fill="#f6f5f5"/><rect x="102.1" y="11.0" width="1.7" height="7.9" rx="0.7" fill="#f6f5f5"/><rect x="104.0" y="-0.5" width="1.9" height="5.9" rx="0.7" fill="#f6f5f5"/><rect x="104.0" y="11.1" width="1.8" height="4.4" rx="0.7" fill="#f6f5f5"/><rect x="107.5" y="12.3" width="2.2" height="6.1" rx="0.7" fill="#f6f5f5"/><rect x="111.4" y="1.5" width="1.7" height="5.6" rx="0.7" fill="#f6f5f5"/><rect x="110.3" y="6.9" width="1.4" height="6.6" rx="0.7" fill="#f6f5f5"/><rect x="111.8" y="12.5" width="2.2" height="6.9" rx="0.7" fill="#f6f5f5"/><rect x="114.0" y="7.3" width="2.2" height="7.2" rx="0.7" fill="#f6f5f5"/><rect x="114.8" y="12.7" width="1.6" height="6.8" rx="0.7" fill="#f6f5f5"/><rect x="116.2" y="13.3" width="2.0" height="6.2" rx="0.7" fill="#f6f5f5"/><rect x="120.4" y="-0.0" width="2.2" height="4.0" rx="0.7" fill="#f6f5f5"/><rect x="120.0" y="6.1" width="1.5" height="6.6" rx="0.7" fill="#f6f5f5"/><rect x="119.5" y="10.3" width="2.1" height="5.1" rx="0.7" fill="#f6f5f5"/><rect x="124.0" y="6.0" width="1.9" height="5.5" rx="0.7" fill="#f6f5f5"/><rect x="123.5" y="12.5" width="1.5" height="6.6" rx="0.7" fill="#f6f5f5"/><rect x="125.6" y="12.3" width="1.5" height="4.0" rx="0.7" fill="#f6f5f5"/><rect x="129.4" y="6.7" width="1.9" height="5.2" rx="0.7" fill="#f6f5f5"/><rect x="128.9" y="10.5" width="1.6" height="7.6" rx="0.7" fill="#f6f5f5"/><rect x="132.9" y="-1.9" width="2.2" height="5.8" rx="0.7" fill="#f6f5f5"/><rect x="131.9" y="5.1" width="2.3" height="4.8" rx="0.7" fill="#f6f5f5"/><rect x="134.3" y="0.1" width="1.5" height="7.8" rx="0.7" fill="#f6f5f5"/><rect x="135.0" y="7.5" width="1.6" height="6.8" rx="0.7" fill="#f6f5f5"/><rect x="135.0" y="10.1" width="1.9" height="4.0" rx="0.7" fill="#f6f5f5"/><rect x="137.6" y="-1.4" width="1.7" height="5.4" rx="0.7" fill="#f6f5f5"/><rect x="137.0" y="7.0" width="1.5" height="7.4" rx="0.7" fill="#f6f5f5"/><rect x="138.4" y="13.6" width="1.8" height="5.2" rx="0.7" fill="#f6f5f5"/><rect x="142.0" y="0.4" width="1.8" height="5.4" rx="0.7" fill="#f6f5f5"/><rect x="143.6" y="7.7" width="1.7" height="5.0" rx="0.7" fill="#f6f5f5"/><rect x="143.4" y="11.5" width="2.3" height="7.8" rx="0.7" fill="#f6f5f5"/><rect x="147.3" y="1.7" width="1.9" height="7.8" rx="0.7" fill="#f6f5f5"/><rect x="146.1" y="6.9" width="2.2" height="5.8" rx="0.7" fill="#f6f5f5"/><rect x="146.6" y="10.2" width="1.5" height="7.7" rx="0.7" fill="#f6f5f5"/><rect x="149.7" y="-0.8" width="2.4" height="7.0" rx="0.7" fill="#f6f5f5"/><rect x="149.6" y="12.2" width="1.6" height="5.6" rx="0.7" fill="#f6f5f5"/><rect x="153.0" y="10.9" width="2.4" height="7.6" rx="0.7" fill="#f6f5f5"/><rect x="155.3" y="-1.2" width="1.7" height="4.4" rx="0.7" fill="#f6f5f5"/><rect x="159.8" y="7.0" width="1.8" height="5.7" rx="0.7" fill="#f6f5f5"/><rect x="158.8" y="11.4" width="1.7" height="4.2" rx="0.7" fill="#f6f5f5"/><rect x="161.3" y="0.0" width="2.3" height="6.5" rx="0.7" fill="#f6f5f5"/><rect x="164.9" y="7.8" width="2.3" height="7.4" rx="0.7" fill="#f6f5f5"/><rect x="168.8" y="5.9" width="1.4" height="6.3" rx="0.7" fill="#f6f5f5"/><rect x="168.9" y="13.3" width="2.4" height="7.4" rx="0.7" fill="#f6f5f5"/><rect x="174.4" y="1.8" width="2.0" height="6.9" rx="0.7" fill="#f6f5f5"/><rect x="173.9" y="6.2" width="2.2" height="4.2" rx="0.7" fill="#f6f5f5"/><rect x="177.3" y="-0.8" width="1.7" height="4.5" rx="0.7" fill="#f6f5f5"/><rect x="177.4" y="4.4" width="1.9" height="4.3" rx="0.7" fill="#f6f5f5"/><rect x="176.8" y="10.9" width="1.4" height="6.4" rx="0.7" fill="#f6f5f5"/><rect x="179.9" y="1.8" width="2.3" height="6.6" rx="0.7" fill="#f6f5f5"/><rect x="179.5" y="5.0" width="2.1" height="7.8" rx="0.7" fill="#f6f5f5"/><rect x="179.0" y="12.0" width="1.8" height="6.7" rx="0.7" fill="#f6f5f5"/><rect x="183.9" y="4.9" width="1.7" height="4.1" rx="0.7" fill="#f6f5f5"/><rect x="183.4" y="10.8" width="2.1" height="7.2" rx="0.7" fill="#f6f5f5"/><rect x="185.4" y="1.9" width="2.2" height="5.2" rx="0.7" fill="#f6f5f5"/><rect x="188.6" y="1.8" width="1.6" height="6.0" rx="0.7" fill="#f6f5f5"/><rect x="189.3" y="13.8" width="1.8" height="4.6" rx="0.7" fill="#f6f5f5"/><rect x="191.3" y="4.2" width="1.8" height="4.2" rx="0.7" fill="#f6f5f5"/><rect x="192.8" y="12.9" width="2.3" height="8.0" rx="0.7" fill="#f6f5f5"/><rect x="194.4" y="1.7" width="1.4" height="7.0" rx="0.7" fill="#f6f5f5"/><rect x="194.8" y="5.5" width="1.6" height="5.3" rx="0.7" fill="#f6f5f5"/><rect x="198.9" y="4.5" width="1.6" height="7.9" rx="0.7" fill="#f6f5f5"/><rect x="198.6" y="13.3" width="1.4" height="5.7" rx="0.7" fill="#f6f5f5"/><rect x="200.7" y="1.7" width="1.8" height="4.8" rx="0.7" fill="#f6f5f5"/><rect x="200.1" y="5.6" width="2.2" height="7.2" rx="0.7" fill="#f6f5f5"/><rect x="203.5" y="13.0" width="1.7" height="7.6" rx="0.7" fill="#f6f5f5"/><rect x="207.2" y="5.0" width="1.7" height="6.9" rx="0.7" fill="#f6f5f5"/><rect x="210.8" y="6.5" width="1.4" height="7.8" rx="0.7" fill="#f6f5f5"/><rect x="213.9" y="1.8" width="1.7" height="5.5" rx="0.7" fill="#f6f5f5"/><rect x="213.0" y="7.7" width="2.2" height="4.7" rx="0.7" fill="#f6f5f5"/><rect x="213.6" y="13.1" width="1.7" height="6.4" rx="0.7" fill="#f6f5f5"/><rect x="215.7" y="1.1" width="1.6" height="4.3" rx="0.7" fill="#f6f5f5"/><rect x="215.5" y="4.3" width="2.0" height="4.1" rx="0.7" fill="#f6f5f5"/><rect x="217.0" y="13.5" width="1.7" height="8.0" rx="0.7" fill="#f6f5f5"/><rect x="219.4" y="11.8" width="1.8" height="4.9" rx="0.7" fill="#f6f5f5"/><rect x="222.3" y="1.0" width="2.1" height="7.4" rx="0.7" fill="#f6f5f5"/><rect x="221.6" y="12.3" width="2.1" height="5.5" rx="0.7" fill="#f6f5f5"/><rect x="228.2" y="5.3" width="2.4" height="5.6" rx="0.7" fill="#f6f5f5"/><rect x="227.5" y="13.2" width="2.4" height="6.6" rx="0.7" fill="#f6f5f5"/><rect x="231.6" y="7.4" width="1.4" height="7.7" rx="0.7" fill="#f6f5f5"/><rect x="234.2" y="13.7" width="2.3" height="5.5" rx="0.7" fill="#f6f5f5"/><rect x="236.5" y="1.1" width="1.5" height="7.8" rx="0.7" fill="#f6f5f5"/><rect x="237.2" y="4.9" width="1.5" height="5.5" rx="0.7" fill="#f6f5f5"/><rect x="240.3" y="4.8" width="1.7" height="4.0" rx="0.7" fill="#f6f5f5"/><rect x="239.4" y="11.2" width="2.2" height="4.8" rx="0.7" fill="#f6f5f5"/><rect x="242.1" y="-1.6" width="2.0" height="5.6" rx="0.7" fill="#f6f5f5"/><rect x="242.2" y="4.7" width="1.8" height="6.8" rx="0.7" fill="#f6f5f5"/><rect x="246.9" y="-0.8" width="1.8" height="6.3" rx="0.7" fill="#f6f5f5"/><rect x="246.7" y="8.0" width="1.6" height="5.5" rx="0.7" fill="#f6f5f5"/><rect x="245.4" y="10.0" width="1.8" height="7.6" rx="0.7" fill="#f6f5f5"/><rect x="248.8" y="1.5" width="1.6" height="5.8" rx="0.7" fill="#f6f5f5"/><rect x="249.3" y="13.6" width="2.0" height="4.4" rx="0.7" fill="#f6f5f5"/><rect x="252.0" y="-1.4" width="1.9" height="5.1" rx="0.7" fill="#f6f5f5"/><rect x="251.2" y="6.0" width="2.4" height="7.2" rx="0.7" fill="#f6f5f5"/><rect x="256.0" y="5.9" width="2.3" height="4.2" rx="0.7" fill="#f6f5f5"/><rect x="255.8" y="12.5" width="1.6" height="7.3" rx="0.7" fill="#f6f5f5"/><rect x="257.4" y="-0.4" width="2.2" height="7.4" rx="0.7" fill="#f6f5f5"/><rect x="261.0" y="-0.5" width="1.6" height="4.5" rx="0.7" fill="#f6f5f5"/><rect x="261.8" y="4.2" width="2.2" height="6.2" rx="0.7" fill="#f6f5f5"/><rect x="263.2" y="0.4" width="2.0" height="6.2" rx="0.7" fill="#f6f5f5"/><rect x="263.8" y="6.3" width="2.1" height="5.7" rx="0.7" fill="#f6f5f5"/><rect x="263.9" y="10.1" width="1.9" height="6.5" rx="0.7" fill="#f6f5f5"/><rect x="267.6" y="5.8" width="1.9" height="4.7" rx="0.7" fill="#f6f5f5"/><rect x="269.2" y="5.8" width="1.4" height="6.0" rx="0.7" fill="#f6f5f5"/><rect x="269.2" y="12.9" width="1.9" height="7.1" rx="0.7" fill="#f6f5f5"/><rect x="272.8" y="7.8" width="2.3" height="4.5" rx="0.7" fill="#f6f5f5"/><rect x="273.5" y="13.3" width="2.4" height="4.8" rx="0.7" fill="#f6f5f5"/><rect x="276.9" y="1.7" width="2.2" height="4.7" rx="0.7" fill="#f6f5f5"/><rect x="275.1" y="5.4" width="1.6" height="7.0" rx="0.7" fill="#f6f5f5"/><rect x="275.5" y="13.3" width="1.9" height="4.6" rx="0.7" fill="#f6f5f5"/><rect x="278.4" y="-0.9" width="1.7" height="6.0" rx="0.7" fill="#f6f5f5"/><rect x="282.4" y="7.6" width="2.2" height="4.7" rx="0.7" fill="#f6f5f5"/><rect x="285.3" y="-0.6" width="2.0" height="7.5" rx="0.7" fill="#f6f5f5"/><rect x="285.8" y="4.4" width="2.0" height="8.0" rx="0.7" fill="#f6f5f5"/><rect x="285.6" y="11.1" width="2.0" height="8.0" rx="0.7" fill="#f6f5f5"/><rect x="288.5" y="-0.2" width="2.1" height="4.7" rx="0.7" fill="#f6f5f5"/><rect x="287.5" y="12.6" width="2.0" height="7.9" rx="0.7" fill="#f6f5f5"/><rect x="290.6" y="-2.0" width="1.5" height="4.1" rx="0.7" fill="#f6f5f5"/><rect x="290.9" y="6.1" width="1.5" height="7.6" rx="0.7" fill="#f6f5f5"/><rect x="293.0" y="-2.0" width="1.5" height="5.4" rx="0.7" fill="#f6f5f5"/><rect x="293.4" y="6.3" width="1.6" height="6.4" rx="0.7" fill="#f6f5f5"/><rect x="293.9" y="10.5" width="1.6" height="7.7" rx="0.7" fill="#f6f5f5"/><rect x="297.7" y="13.1" width="1.7" height="5.6" rx="0.7" fill="#f6f5f5"/><rect x="300.1" y="5.4" width="1.8" height="6.6" rx="0.7" fill="#f6f5f5"/><rect x="300.5" y="11.0" width="1.4" height="7.6" rx="0.7" fill="#f6f5f5"/><rect x="302.8" y="-1.0" width="2.2" height="4.2" rx="0.7" fill="#f6f5f5"/><rect x="303.9" y="10.6" width="2.0" height="4.8" rx="0.7" fill="#f6f5f5"/><rect x="306.3" y="1.3" width="1.7" height="4.7" rx="0.7" fill="#f6f5f5"/><rect x="305.1" y="7.6" width="2.1" height="7.1" rx="0.7" fill="#f6f5f5"/><rect x="309.5" y="-0.1" width="1.9" height="7.0" rx="0.7" fill="#f6f5f5"/><rect x="312.5" y="12.8" width="2.1" height="7.4" rx="0.7" fill="#f6f5f5"/><rect x="314.9" y="7.2" width="1.7" height="6.1" rx="0.7" fill="#f6f5f5"/><rect x="315.9" y="10.9" width="1.4" height="7.5" rx="0.7" fill="#f6f5f5"/><rect x="318.9" y="13.0" width="2.3" height="5.3" rx="0.7" fill="#f6f5f5"/><rect x="320.5" y="1.6" width="2.1" height="6.5" rx="0.7" fill="#f6f5f5"/><rect x="322.0" y="5.9" width="2.1" height="7.4" rx="0.7" fill="#f6f5f5"/><rect x="320.9" y="12.9" width="1.7" height="6.3" rx="0.7" fill="#f6f5f5"/><rect x="323.2" y="7.6" width="1.4" height="4.6" rx="0.7" fill="#f6f5f5"/><rect x="326.7" y="-1.4" width="1.4" height="4.1" rx="0.7" fill="#f6f5f5"/><rect x="327.3" y="6.8" width="1.5" height="6.9" rx="0.7" fill="#f6f5f5"/><rect x="326.7" y="13.3" width="2.3" height="7.3" rx="0.7" fill="#f6f5f5"/><rect x="330.8" y="7.8" width="1.6" height="4.4" rx="0.7" fill="#f6f5f5"/><rect x="333.6" y="6.5" width="2.0" height="7.3" rx="0.7" fill="#f6f5f5"/><rect x="335.4" y="11.3" width="1.4" height="5.7" rx="0.7" fill="#f6f5f5"/><rect x="338.7" y="11.3" width="1.9" height="7.9" rx="0.7" fill="#f6f5f5"/><rect x="342.2" y="-1.9" width="1.8" height="5.7" rx="0.7" fill="#f6f5f5"/><rect x="341.7" y="6.8" width="1.6" height="6.2" rx="0.7" fill="#f6f5f5"/><rect x="341.2" y="13.3" width="1.4" height="4.7" rx="0.7" fill="#f6f5f5"/><rect x="346.0" y="4.0" width="1.9" height="6.0" rx="0.7" fill="#f6f5f5"/><rect x="344.4" y="12.0" width="2.2" height="5.4" rx="0.7" fill="#f6f5f5"/><rect x="347.6" y="4.9" width="1.9" height="6.8" rx="0.7" fill="#f6f5f5"/><rect x="350.2" y="1.2" width="2.2" height="6.8" rx="0.7" fill="#f6f5f5"/><rect x="350.7" y="5.6" width="2.3" height="5.6" rx="0.7" fill="#f6f5f5"/><rect x="353.1" y="-1.2" width="2.3" height="5.1" rx="0.7" fill="#f6f5f5"/><rect x="353.8" y="7.5" width="1.9" height="4.9" rx="0.7" fill="#f6f5f5"/><rect x="354.5" y="13.0" width="1.7" height="6.6" rx="0.7" fill="#f6f5f5"/><rect x="356.3" y="1.4" width="2.1" height="6.6" rx="0.7" fill="#f6f5f5"/><rect x="357.5" y="12.3" width="1.9" height="4.5" rx="0.7" fill="#f6f5f5"/><rect x="359.5" y="-1.2" width="2.1" height="5.2" rx="0.7" fill="#f6f5f5"/><rect x="359.3" y="4.6" width="1.7" height="5.0" rx="0.7" fill="#f6f5f5"/><rect x="359.3" y="11.3" width="2.4" height="4.8" rx="0.7" fill="#f6f5f5"/><rect x="362.2" y="1.8" width="1.8" height="4.4" rx="0.7" fill="#f6f5f5"/><rect x="363.6" y="6.9" width="1.6" height="5.7" rx="0.7" fill="#f6f5f5"/><rect x="362.2" y="10.8" width="1.4" height="5.6" rx="0.7" fill="#f6f5f5"/><rect x="366.6" y="0.8" width="2.0" height="6.0" rx="0.7" fill="#f6f5f5"/><rect x="365.3" y="6.4" width="2.1" height="5.6" rx="0.7" fill="#f6f5f5"/><rect x="365.9" y="12.3" width="1.8" height="7.0" rx="0.7" fill="#f6f5f5"/><rect x="369.8" y="7.1" width="2.3" height="6.8" rx="0.7" fill="#f6f5f5"/><rect x="369.3" y="11.8" width="2.0" height="5.3" rx="0.7" fill="#f6f5f5"/><rect x="372.6" y="6.9" width="1.7" height="6.5" rx="0.7" fill="#f6f5f5"/><rect x="371.9" y="12.5" width="2.1" height="5.6" rx="0.7" fill="#f6f5f5"/><rect x="374.4" y="0.6" width="1.8" height="7.1" rx="0.7" fill="#f6f5f5"/><rect x="375.9" y="4.2" width="1.6" height="6.2" rx="0.7" fill="#f6f5f5"/><rect x="375.9" y="12.1" width="2.0" height="4.4" rx="0.7" fill="#f6f5f5"/><rect x="378.4" y="0.0" width="2.2" height="6.6" rx="0.7" fill="#f6f5f5"/><rect x="377.8" y="7.8" width="2.1" height="4.8" rx="0.7" fill="#f6f5f5"/><rect x="378.5" y="10.5" width="1.8" height="7.9" rx="0.7" fill="#f6f5f5"/><rect x="380.0" y="11.7" width="2.1" height="5.7" rx="0.7" fill="#f6f5f5"/><rect x="383.5" y="-1.1" width="2.3" height="7.0" rx="0.7" fill="#f6f5f5"/><rect x="383.4" y="7.2" width="1.6" height="5.6" rx="0.7" fill="#f6f5f5"/><rect x="387.6" y="0.5" width="2.0" height="5.9" rx="0.7" fill="#f6f5f5"/><rect x="386.7" y="12.6" width="2.2" height="7.3" rx="0.7" fill="#f6f5f5"/><rect x="389.6" y="0.2" width="2.2" height="4.5" rx="0.7" fill="#f6f5f5"/><rect x="390.7" y="5.1" width="1.7" height="5.5" rx="0.7" fill="#f6f5f5"/><rect x="389.4" y="10.0" width="1.7" height="6.9" rx="0.7" fill="#f6f5f5"/><rect x="393.0" y="5.7" width="2.1" height="6.5" rx="0.7" fill="#f6f5f5"/><rect x="393.9" y="13.4" width="2.2" height="4.2" rx="0.7" fill="#f6f5f5"/><rect x="396.6" y="-1.4" width="2.0" height="7.3" rx="0.7" fill="#f6f5f5"/><rect x="399.3" y="-1.0" width="1.5" height="4.4" rx="0.7" fill="#f6f5f5"/><rect x="398.7" y="10.6" width="2.2" height="7.6" rx="0.7" fill="#f6f5f5"/><rect x="402.2" y="7.1" width="2.3" height="6.7" rx="0.7" fill="#f6f5f5"/><rect x="402.7" y="10.8" width="1.9" height="6.8" rx="0.7" fill="#f6f5f5"/><rect x="404.9" y="1.5" width="1.7" height="6.2" rx="0.7" fill="#f6f5f5"/><rect x="407.1" y="-0.1" width="1.9" height="4.6" rx="0.7" fill="#f6f5f5"/><rect x="408.1" y="7.5" width="2.2" height="4.0" rx="0.7" fill="#f6f5f5"/><rect x="408.1" y="12.7" width="1.8" height="7.4" rx="0.7" fill="#f6f5f5"/><rect x="411.9" y="-1.7" width="2.0" height="6.5" rx="0.7" fill="#f6f5f5"/><rect x="411.4" y="13.7" width="2.4" height="5.3" rx="0.7" fill="#f6f5f5"/><rect x="414.0" y="1.6" width="2.1" height="4.1" rx="0.7" fill="#f6f5f5"/><rect x="413.7" y="7.4" width="1.9" height="5.5" rx="0.7" fill="#f6f5f5"/><rect x="414.5" y="10.8" width="1.8" height="5.7" rx="0.7" fill="#f6f5f5"/><rect x="417.7" y="-0.8" width="1.8" height="7.3" rx="0.7" fill="#f6f5f5"/><rect x="416.5" y="6.0" width="2.1" height="7.9" rx="0.7" fill="#f6f5f5"/><rect x="416.7" y="11.3" width="2.0" height="5.2" rx="0.7" fill="#f6f5f5"/><rect x="420.6" y="-1.8" width="2.3" height="6.9" rx="0.7" fill="#f6f5f5"/><rect x="419.1" y="5.2" width="1.6" height="4.0" rx="0.7" fill="#f6f5f5"/><rect x="420.2" y="12.6" width="2.3" height="7.2" rx="0.7" fill="#f6f5f5"/><rect x="423.2" y="0.5" width="2.0" height="6.8" rx="0.7" fill="#f6f5f5"/><rect x="422.4" y="6.7" width="2.2" height="5.8" rx="0.7" fill="#f6f5f5"/><rect x="426.8" y="12.6" width="2.2" height="5.5" rx="0.7" fill="#f6f5f5"/><rect x="429.1" y="-1.0" width="1.8" height="5.2" rx="0.7" fill="#f6f5f5"/><rect x="428.9" y="6.6" width="1.5" height="7.7" rx="0.7" fill="#f6f5f5"/><rect x="428.1" y="10.5" width="2.0" height="7.2" rx="0.7" fill="#f6f5f5"/><rect x="431.9" y="-1.9" width="2.0" height="5.5" rx="0.7" fill="#f6f5f5"/><rect x="433.0" y="5.9" width="1.5" height="5.6" rx="0.7" fill="#f6f5f5"/><rect x="431.4" y="10.6" width="1.4" height="4.1" rx="0.7" fill="#f6f5f5"/><rect x="434.2" y="1.9" width="2.3" height="4.4" rx="0.7" fill="#f6f5f5"/><rect x="437.5" y="0.9" width="1.5" height="4.7" rx="0.7" fill="#f6f5f5"/><rect x="438.4" y="7.4" width="1.5" height="6.9" rx="0.7" fill="#f6f5f5"/><rect x="438.4" y="11.8" width="1.7" height="7.7" rx="0.7" fill="#f6f5f5"/><rect x="441.4" y="-2.0" width="2.1" height="4.1" rx="0.7" fill="#f6f5f5"/><rect x="440.2" y="5.2" width="1.6" height="6.9" rx="0.7" fill="#f6f5f5"/><rect x="441.0" y="10.2" width="2.0" height="5.5" rx="0.7" fill="#f6f5f5"/><rect x="444.4" y="-1.4" width="1.8" height="7.2" rx="0.7" fill="#f6f5f5"/><rect x="444.3" y="5.7" width="2.2" height="5.5" rx="0.7" fill="#f6f5f5"/><rect x="444.6" y="12.3" width="1.5" height="5.2" rx="0.7" fill="#f6f5f5"/><rect x="447.4" y="1.3" width="2.0" height="5.3" rx="0.7" fill="#f6f5f5"/><rect x="447.7" y="6.4" width="1.8" height="5.2" rx="0.7" fill="#f6f5f5"/><rect x="446.8" y="12.7" width="2.3" height="6.4" rx="0.7" fill="#f6f5f5"/><rect x="449.6" y="-2.0" width="1.8" height="5.1" rx="0.7" fill="#f6f5f5"/><rect x="450.6" y="7.5" width="2.2" height="4.2" rx="0.7" fill="#f6f5f5"/><rect x="450.7" y="12.3" width="2.3" height="5.1" rx="0.7" fill="#f6f5f5"/><rect x="453.4" y="1.7" width="1.5" height="5.4" rx="0.7" fill="#f6f5f5"/><rect x="453.6" y="4.8" width="2.3" height="7.0" rx="0.7" fill="#f6f5f5"/><rect x="456.4" y="-0.1" width="1.7" height="4.8" rx="0.7" fill="#f6f5f5"/><rect x="456.6" y="5.8" width="2.2" height="4.4" rx="0.7" fill="#f6f5f5"/><rect x="455.5" y="12.3" width="2.3" height="7.6" rx="0.7" fill="#f6f5f5"/><rect x="459.0" y="0.4" width="1.6" height="4.8" rx="0.7" fill="#f6f5f5"/><rect x="458.7" y="12.3" width="1.9" height="5.6" rx="0.7" fill="#f6f5f5"/><rect x="461.7" y="10.4" width="2.2" height="6.5" rx="0.7" fill="#f6f5f5"/><rect x="464.7" y="6.1" width="1.4" height="4.1" rx="0.7" fill="#f6f5f5"/><rect x="465.7" y="11.9" width="1.7" height="6.3" rx="0.7" fill="#f6f5f5"/><rect x="467.9" y="1.8" width="2.2" height="7.1" rx="0.7" fill="#f6f5f5"/><rect x="467.5" y="4.2" width="1.6" height="4.8" rx="0.7" fill="#f6f5f5"/><rect x="471.7" y="5.8" width="2.3" height="7.8" rx="0.7" fill="#f6f5f5"/><rect x="473.8" y="-1.5" width="1.7" height="7.8" rx="0.7" fill="#f6f5f5"/><rect x="474.3" y="7.8" width="1.8" height="6.7" rx="0.7" fill="#f6f5f5"/><rect x="473.3" y="13.9" width="1.6" height="8.0" rx="0.7" fill="#f6f5f5"/><rect x="477.8" y="13.6" width="1.4" height="7.3" rx="0.7" fill="#f6f5f5"/><rect x="480.4" y="0.6" width="1.5" height="7.9" rx="0.7" fill="#f6f5f5"/><rect x="480.9" y="12.7" width="2.0" height="5.2" rx="0.7" fill="#f6f5f5"/><rect x="482.2" y="-0.7" width="1.5" height="5.0" rx="0.7" fill="#f6f5f5"/><rect x="482.3" y="5.0" width="2.1" height="4.6" rx="0.7" fill="#f6f5f5"/><rect x="485.4" y="-1.9" width="1.6" height="7.7" rx="0.7" fill="#f6f5f5"/><rect x="486.7" y="7.6" width="1.8" height="4.6" rx="0.7" fill="#f6f5f5"/><rect x="489.7" y="0.5" width="1.7" height="5.8" rx="0.7" fill="#f6f5f5"/><rect x="489.0" y="6.5" width="1.6" height="4.6" rx="0.7" fill="#f6f5f5"/><rect x="492.1" y="-1.4" width="1.7" height="7.5" rx="0.7" fill="#f6f5f5"/><rect x="491.3" y="5.1" width="1.7" height="7.4" rx="0.7" fill="#f6f5f5"/><rect x="494.6" y="1.6" width="2.4" height="4.5" rx="0.7" fill="#f6f5f5"/><rect x="495.3" y="10.8" width="1.7" height="5.9" rx="0.7" fill="#f6f5f5"/><rect x="499.0" y="14.0" width="1.5" height="7.7" rx="0.7" fill="#f6f5f5"/><rect x="500.1" y="6.9" width="2.4" height="5.2" rx="0.7" fill="#f6f5f5"/><rect x="503.7" y="-1.4" width="2.2" height="4.0" rx="0.7" fill="#f6f5f5"/><rect x="503.4" y="5.7" width="1.6" height="7.6" rx="0.7" fill="#f6f5f5"/><rect x="503.3" y="10.7" width="2.1" height="7.1" rx="0.7" fill="#f6f5f5"/><rect x="510.0" y="-0.9" width="2.0" height="4.8" rx="0.7" fill="#f6f5f5"/><rect x="510.6" y="6.3" width="1.5" height="4.8" rx="0.7" fill="#f6f5f5"/><rect x="509.8" y="12.9" width="2.2" height="4.2" rx="0.7" fill="#f6f5f5"/><rect x="513.7" y="1.5" width="1.4" height="6.0" rx="0.7" fill="#f6f5f5"/><rect x="513.0" y="7.5" width="1.6" height="5.1" rx="0.7" fill="#f6f5f5"/><rect x="512.7" y="10.7" width="2.0" height="5.5" rx="0.7" fill="#f6f5f5"/><rect x="515.9" y="6.1" width="2.1" height="4.5" rx="0.7" fill="#f6f5f5"/><rect x="516.7" y="11.3" width="1.8" height="6.8" rx="0.7" fill="#f6f5f5"/><rect x="518.1" y="1.5" width="1.9" height="7.8" rx="0.7" fill="#f6f5f5"/><rect x="519.1" y="6.1" width="2.4" height="4.1" rx="0.7" fill="#f6f5f5"/><rect x="524.1" y="-1.6" width="1.6" height="6.8" rx="0.7" fill="#f6f5f5"/><rect x="525.2" y="12.1" width="1.5" height="6.8" rx="0.7" fill="#f6f5f5"/><rect x="528.4" y="-1.8" width="1.9" height="4.5" rx="0.7" fill="#f6f5f5"/><rect x="527.6" y="4.5" width="1.5" height="5.6" rx="0.7" fill="#f6f5f5"/><rect x="528.7" y="10.6" width="2.1" height="6.3" rx="0.7" fill="#f6f5f5"/><rect x="531.9" y="5.6" width="2.2" height="5.7" rx="0.7" fill="#f6f5f5"/><rect x="530.8" y="13.8" width="1.7" height="7.1" rx="0.7" fill="#f6f5f5"/><rect x="533.9" y="7.9" width="2.3" height="7.2" rx="0.7" fill="#f6f5f5"/><rect x="534.7" y="10.2" width="2.4" height="6.1" rx="0.7" fill="#f6f5f5"/><rect x="536.5" y="-0.3" width="1.8" height="6.5" rx="0.7" fill="#f6f5f5"/><rect x="536.1" y="5.7" width="1.4" height="6.0" rx="0.7" fill="#f6f5f5"/><rect x="540.6" y="1.7" width="2.2" height="6.5" rx="0.7" fill="#f6f5f5"/><rect x="540.8" y="4.1" width="1.7" height="6.6" rx="0.7" fill="#f6f5f5"/><rect x="539.5" y="12.2" width="2.0" height="7.7" rx="0.7" fill="#f6f5f5"/><rect x="542.9" y="7.8" width="1.7" height="5.2" rx="0.7" fill="#f6f5f5"/><rect x="542.2" y="12.4" width="1.9" height="7.8" rx="0.7" fill="#f6f5f5"/><rect x="546.1" y="4.6" width="1.5" height="4.5" rx="0.7" fill="#f6f5f5"/><rect x="548.6" y="-1.0" width="1.9" height="4.4" rx="0.7" fill="#f6f5f5"/><rect x="549.2" y="6.3" width="1.6" height="6.6" rx="0.7" fill="#f6f5f5"/><rect x="548.9" y="12.2" width="1.9" height="6.5" rx="0.7" fill="#f6f5f5"/><rect x="551.5" y="-1.1" width="1.8" height="6.0" rx="0.7" fill="#f6f5f5"/><rect x="551.0" y="5.4" width="1.6" height="7.4" rx="0.7" fill="#f6f5f5"/><rect x="552.0" y="11.1" width="1.7" height="8.0" rx="0.7" fill="#f6f5f5"/><rect x="554.3" y="-1.7" width="1.8" height="7.5" rx="0.7" fill="#f6f5f5"/><rect x="554.9" y="12.9" width="1.6" height="4.4" rx="0.7" fill="#f6f5f5"/><rect x="558.5" y="-1.4" width="1.8" height="5.3" rx="0.7" fill="#f6f5f5"/><rect x="558.2" y="7.4" width="1.9" height="7.3" rx="0.7" fill="#f6f5f5"/><rect x="558.5" y="13.0" width="2.2" height="5.9" rx="0.7" fill="#f6f5f5"/><rect x="561.8" y="-1.5" width="1.4" height="7.5" rx="0.7" fill="#f6f5f5"/><rect x="561.2" y="6.0" width="2.0" height="7.9" rx="0.7" fill="#f6f5f5"/><rect x="561.6" y="13.5" width="1.8" height="6.4" rx="0.7" fill="#f6f5f5"/><rect x="563.9" y="0.9" width="1.8" height="5.2" rx="0.7" fill="#f6f5f5"/><rect x="563.8" y="5.3" width="2.2" height="7.1" rx="0.7" fill="#f6f5f5"/><rect x="563.9" y="10.7" width="1.5" height="5.2" rx="0.7" fill="#f6f5f5"/><rect x="567.2" y="-1.6" width="1.7" height="7.7" rx="0.7" fill="#f6f5f5"/><rect x="567.7" y="7.8" width="1.8" height="4.8" rx="0.7" fill="#f6f5f5"/><rect x="566.0" y="10.2" width="1.9" height="6.3" rx="0.7" fill="#f6f5f5"/><rect x="570.5" y="0.2" width="1.9" height="8.0" rx="0.7" fill="#f6f5f5"/><rect x="570.4" y="5.6" width="2.0" height="5.4" rx="0.7" fill="#f6f5f5"/><rect x="570.9" y="12.7" width="1.5" height="6.1" rx="0.7" fill="#f6f5f5"/><rect x="572.8" y="0.2" width="2.3" height="6.3" rx="0.7" fill="#f6f5f5"/><rect x="573.0" y="5.8" width="2.4" height="6.5" rx="0.7" fill="#f6f5f5"/><rect x="573.1" y="13.3" width="1.7" height="4.7" rx="0.7" fill="#f6f5f5"/><rect x="576.7" y="0.1" width="2.3" height="4.4" rx="0.7" fill="#f6f5f5"/><rect x="576.6" y="8.0" width="1.8" height="7.6" rx="0.7" fill="#f6f5f5"/><rect x="579.0" y="4.8" width="2.0" height="4.7" rx="0.7" fill="#f6f5f5"/><rect x="578.7" y="14.0" width="1.4" height="6.5" rx="0.7" fill="#f6f5f5"/><rect x="582.6" y="-0.8" width="1.4" height="6.8" rx="0.7" fill="#f6f5f5"/><rect x="582.7" y="6.3" width="1.6" height="6.7" rx="0.7" fill="#f6f5f5"/><rect x="582.1" y="11.1" width="1.9" height="6.6" rx="0.7" fill="#f6f5f5"/><rect x="585.1" y="-0.4" width="1.6" height="4.5" rx="0.7" fill="#f6f5f5"/><rect x="584.2" y="4.4" width="1.9" height="4.7" rx="0.7" fill="#f6f5f5"/><rect x="585.2" y="13.2" width="1.4" height="4.2" rx="0.7" fill="#f6f5f5"/><rect x="587.6" y="0.9" width="1.6" height="5.4" rx="0.7" fill="#f6f5f5"/><rect x="591.2" y="-0.6" width="1.8" height="5.8" rx="0.7" fill="#f6f5f5"/><rect x="591.2" y="13.8" width="2.0" height="5.8" rx="0.7" fill="#f6f5f5"/><rect x="594.7" y="11.3" width="2.2" height="7.6" rx="0.7" fill="#f6f5f5"/><rect x="597.2" y="1.8" width="2.3" height="6.0" rx="0.7" fill="#f6f5f5"/><rect x="597.4" y="10.9" width="2.3" height="5.2" rx="0.7" fill="#f6f5f5"/><rect x="600.6" y="-1.0" width="1.8" height="4.7" rx="0.7" fill="#f6f5f5"/><rect x="599.6" y="12.2" width="1.9" height="4.5" rx="0.7" fill="#f6f5f5"/><rect x="602.8" y="-1.7" width="2.2" height="4.5" rx="0.7" fill="#f6f5f5"/><rect x="602.5" y="4.8" width="1.6" height="5.1" rx="0.7" fill="#f6f5f5"/><rect x="605.7" y="-1.4" width="1.5" height="6.8" rx="0.7" fill="#f6f5f5"/><rect x="605.3" y="11.8" width="2.2" height="7.3" rx="0.7" fill="#f6f5f5"/><rect x="609.4" y="5.5" width="1.6" height="7.8" rx="0.7" fill="#f6f5f5"/><rect x="609.0" y="10.9" width="1.5" height="5.8" rx="0.7" fill="#f6f5f5"/><rect x="611.5" y="1.6" width="1.8" height="6.4" rx="0.7" fill="#f6f5f5"/><rect x="611.4" y="13.5" width="1.9" height="4.5" rx="0.7" fill="#f6f5f5"/><rect x="614.5" y="1.1" width="2.1" height="5.5" rx="0.7" fill="#f6f5f5"/><rect x="614.6" y="5.6" width="1.6" height="4.3" rx="0.7" fill="#f6f5f5"/><rect x="614.6" y="12.7" width="2.0" height="4.4" rx="0.7" fill="#f6f5f5"/><rect x="618.0" y="-0.8" width="1.7" height="4.3" rx="0.7" fill="#f6f5f5"/><rect x="620.6" y="-0.4" width="2.2" height="7.6" rx="0.7" fill="#f6f5f5"/><rect x="621.7" y="4.5" width="1.4" height="5.1" rx="0.7" fill="#f6f5f5"/><rect x="621.3" y="11.4" width="2.1" height="5.7" rx="0.7" fill="#f6f5f5"/><rect x="623.5" y="1.4" width="2.0" height="5.4" rx="0.7" fill="#f6f5f5"/><rect x="627.5" y="0.9" width="1.4" height="4.2" rx="0.7" fill="#f6f5f5"/><rect x="629.8" y="-1.8" width="2.0" height="5.2" rx="0.7" fill="#f6f5f5"/><rect x="630.1" y="12.9" width="1.8" height="5.0" rx="0.7" fill="#f6f5f5"/><rect x="632.7" y="-2.0" width="2.2" height="7.3" rx="0.7" fill="#f6f5f5"/><rect x="636.2" y="-1.8" width="1.5" height="5.0" rx="0.7" fill="#f6f5f5"/><rect x="635.4" y="7.7" width="1.5" height="7.0" rx="0.7" fill="#f6f5f5"/><rect x="635.8" y="13.0" width="1.7" height="7.3" rx="0.7" fill="#f6f5f5"/><rect x="638.8" y="7.7" width="2.1" height="6.8" rx="0.7" fill="#f6f5f5"/><rect x="639.3" y="11.8" width="2.1" height="4.2" rx="0.7" fill="#f6f5f5"/><rect x="642.0" y="1.7" width="2.2" height="4.5" rx="0.7" fill="#f6f5f5"/><rect x="642.6" y="11.0" width="2.4" height="6.2" rx="0.7" fill="#f6f5f5"/><rect x="645.1" y="-1.0" width="1.8" height="4.2" rx="0.7" fill="#f6f5f5"/><rect x="644.4" y="5.2" width="2.1" height="4.5" rx="0.7" fill="#f6f5f5"/><rect x="644.5" y="11.0" width="1.8" height="6.1" rx="0.7" fill="#f6f5f5"/><rect x="647.7" y="-0.8" width="1.5" height="7.5" rx="0.7" fill="#f6f5f5"/><rect x="647.7" y="7.3" width="2.2" height="6.2" rx="0.7" fill="#f6f5f5"/><rect x="651.2" y="-0.2" width="2.2" height="7.1" rx="0.7" fill="#f6f5f5"/><rect x="653.4" y="-1.8" width="1.6" height="5.1" rx="0.7" fill="#f6f5f5"/><rect x="653.9" y="4.5" width="1.9" height="5.3" rx="0.7" fill="#f6f5f5"/><rect x="653.3" y="10.3" width="2.4" height="4.0" rx="0.7" fill="#f6f5f5"/><rect x="656.2" y="0.9" width="2.0" height="7.9" rx="0.7" fill="#f6f5f5"/><rect x="656.9" y="10.8" width="1.4" height="6.2" rx="0.7" fill="#f6f5f5"/><rect x="660.3" y="0.5" width="2.1" height="7.7" rx="0.7" fill="#f6f5f5"/><rect x="663.7" y="11.2" width="2.0" height="4.7" rx="0.7" fill="#f6f5f5"/><rect x="666.9" y="-1.3" width="2.2" height="7.1" rx="0.7" fill="#f6f5f5"/><rect x="665.7" y="4.7" width="1.7" height="7.3" rx="0.7" fill="#f6f5f5"/><rect x="666.1" y="11.5" width="1.6" height="7.3" rx="0.7" fill="#f6f5f5"/><rect x="669.3" y="7.3" width="2.3" height="6.8" rx="0.7" fill="#f6f5f5"/><rect x="669.0" y="12.0" width="1.7" height="4.6" rx="0.7" fill="#f6f5f5"/></svg></div>
<div class="t" style="left:444.80px;top:323.30px;font-size:20.55px;color:#161513;font-weight:700;">Create Training Set Using Manual Corrections</div>
<div style="position:absolute;left:445px;top:361px;width:602px;height:48px;border:2px solid #0d6b8e;border-radius:4px;background:#fff;"></div>
<div class="t" style="left:462.60px;top:377.89px;font-size:13px;color:#6b6b6b;font-weight:700;">Data Set</div>
<div style="position:absolute;left:462px;top:390px;width:1px;height:14px;background:#a9a9a9;"></div>
<div style="position:absolute;left:998px;top:366px;width:1px;height:42px;background:#6a6a6a;"></div>
<svg style="position:absolute;left:1018px;top:384px" width="12" height="7"><polygon points="0.5,0.5 11,0.5 5.75,6" fill="#161513"/></svg>
<div style="position:absolute;left:445px;top:417px;width:604px;height:403px;background:#fff;border:1px solid #dcdad8;border-radius:4px;box-shadow:0 4px 10px rgba(0,0,0,0.22);"></div>
<div style="position:absolute;left:446px;top:667px;width:604px;height:48px;background:#edeceb;"></div>
<div class="t" style="left:461.30px;top:444.25px;font-size:16px;color:#161513;font-weight:400;">DEMO-TRAIN-Q1</div>
<div class="t" style="left:461.30px;top:492.25px;font-size:16px;color:#161513;font-weight:400;">DEMO-TST01</div>
<div class="t" style="left:461.30px;top:540.25px;font-size:16px;color:#161513;font-weight:400;">DEMOF15325</div>
<div class="t" style="left:461.30px;top:588.25px;font-size:16px;color:#161513;font-weight:400;">REQ_TRN_CLSFY1</div>
<div class="t" style="left:461.30px;top:636.25px;font-size:16px;color:#161513;font-weight:400;">AI_TS_5002</div>
<div class="t" style="left:461.30px;top:684.25px;font-size:16px;color:#161513;font-weight:400;">REQ_TRN_CLSFY</div>
<div class="t" style="left:461.30px;top:732.25px;font-size:16px;color:#161513;font-weight:400;">AI_TS_1002</div>
<div class="t" style="left:461.30px;top:780.25px;font-size:16px;color:#161513;font-weight:400;">DEMOE15325</div>
<div style="position:absolute;left:1046px;top:420px;width:3px;height:279px;background:#d6d6d6;border-radius:2px;"></div>
</body></html>
